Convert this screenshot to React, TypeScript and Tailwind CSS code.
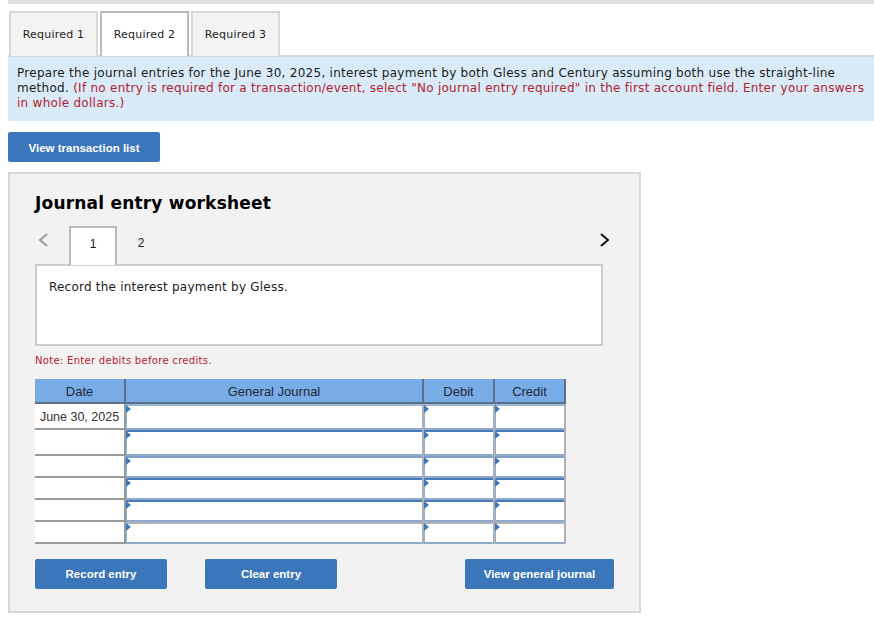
const rows = [
  { date: 'June 30, 2025', height: 'h-[26px]', top: 'border-t-[#9db8d8]' },
  { date: '', height: 'h-[26px]', top: 'border-t-[#4a7ab8]' },
  { date: '', height: 'h-[22px]', top: 'border-t-[#7f9fc9]' },
  { date: '', height: 'h-[22px]', top: 'border-t-[#4a7ab8]' },
  { date: '', height: 'h-[22px]', top: 'border-t-[#4a7ab8]' },
  { date: '', height: 'h-[22px]', top: 'border-t-[#b0b4ba]' },
];

const tabs = ['Required 1', 'Required 2', 'Required 3'];

function InputCell({ top, width }: { top: string; width: string }) {
  return (
    <div className={`relative ${width} shrink-0 border-r-2 border-r-[#b0b0b0] bg-white`}>
      <div className={`h-full border-b-2 border-l border-t-2 border-b-[#8fa9cc] border-l-[#8fb0dc] ${top}`} />
      <svg className="absolute left-0 top-[1px]" width="5" height="8" viewBox="0 0 5 8">
        <path d="M0 0L5 4L0 8Z" fill="#3a78bd" />
      </svg>
    </div>
  );
}

function BlueButton({ label, className }: { label: string; className: string }) {
  return (
    <button className={`h-[30px] rounded-[2px] bg-[#3a76b9] font-['Liberation_Sans',sans-serif] text-[11.5px] font-bold text-white ${className}`}>
      {label}
    </button>
  );
}

export default function App() {
  return (
    <div className="h-[623px] w-[874px] overflow-hidden bg-white pl-2 font-['DejaVu_Sans',sans-serif] text-[#1c1c1c]">
      <div className="h-1 bg-[#e0e0e0]" />

      <div className="mt-[7px] flex h-[46px] gap-[2px] border-b-2 border-[#d6d6d6] pl-[1px]">
        {tabs.map((tab, i) => (
          <div
            key={tab}
            className={`flex h-[45px] w-[89px] items-center justify-center border-2 border-b-0 pt-[2px] text-[11px] tracking-[0.2px] ${
              i === 1 ? 'border-[#bababa] bg-white' : 'border-[#d8d8d8] bg-[#f3f3f3]'
            }`}
          >
            {tab}
          </div>
        ))}
      </div>

      <div className="h-[64px] bg-[#d9ebf9] pl-[9px] pr-[2px] pt-[9px] text-[12px] leading-[15px] tracking-[0.27px]">
        Prepare the journal entries for the June 30, 2025, interest payment by both Gless and Century assuming both use the straight-line method.{' '}
        <span className="text-[#b5212c]">
          (If no entry is required for a transaction/event, select "No journal entry required" in the first account field. Enter your answers in whole dollars.)
        </span>
      </div>

      <div className="mt-[11px]">
        <BlueButton label="View transaction list" className="w-[152px] pt-[3px]" />
      </div>

      <div className="mt-[10px] h-[441px] w-[633px] border-2 border-[#d8d8d8] bg-[#f2f2f2] px-[25px] pt-[19px]">
        <h2 className="text-[17px] font-bold leading-[20px] tracking-[0.2px] text-black">Journal entry worksheet</h2>

        <div className="relative mt-[13px] flex h-[38px] items-start">
          <svg className="ml-[3px] mt-[7px]" width="10" height="14" viewBox="0 0 10 14" fill="none">
            <path d="M9 1L2 7L9 13" stroke="#9a9a9a" strokeWidth="2" />
          </svg>
          <div className="relative z-10 ml-[21px] flex h-[39px] w-[48px] items-center justify-center border-2 border-b-0 border-[#bababa] bg-white pb-[6px] font-['Liberation_Sans',sans-serif] text-[12px]">
            1
          </div>
          <div className="flex h-[39px] w-[48px] items-center justify-center pb-[6px] font-['Liberation_Sans',sans-serif] text-[12px]">2</div>
          <svg className="absolute left-[565px] top-[7px]" width="10" height="14" viewBox="0 0 10 14" fill="none">
            <path d="M1 1L8 7L1 13" stroke="#111111" strokeWidth="2" />
          </svg>
        </div>

        <div className="h-[82px] w-[568px] border-2 border-[#cccccc] bg-white px-[12px] pt-[14px] text-[12px] leading-[15px] tracking-[0.22px]">
          Record the interest payment by Gless.
        </div>

        <p className="mt-[9px] text-[10px] leading-[12px] tracking-[0.3px] text-[#b5212c]">Note: Enter debits before credits.</p>

        <div className="mt-[12px] w-[531px] font-['Liberation_Sans',sans-serif] text-[13px]">
          <div className="flex h-[25px] border-b-2 border-[#5b7087] bg-[#78ace6] text-center leading-[25px] text-[#1f2937]">
            <div className="w-[91px] border-r-2 border-[#5b7087]">Date</div>
            <div className="w-[298px] border-r-2 border-[#5b7087]">General Journal</div>
            <div className="w-[71px] border-r-2 border-[#5b7087]">Debit</div>
            <div className="w-[71px] border-r-2 border-[#5b7087]">Credit</div>
          </div>
          {rows.map((row, i) => (
            <div key={i} className={`flex ${row.height}`}>
              <div className="w-[91px] shrink-0 border-b-2 border-r-2 border-b-[#9a9a9a] border-r-[#9a9a9a] bg-white pt-[5px] text-center text-[12.5px] leading-[16px] text-[#333333]">
                {row.date}
              </div>
              <InputCell top={row.top} width="w-[298px]" />
              <InputCell top={row.top} width="w-[71px]" />
              <InputCell top={row.top} width="w-[71px]" />
            </div>
          ))}
        </div>

        <div className="mt-[15px] flex w-[579px]">
          <BlueButton label="Record entry" className="w-[132px] pt-[2px]" />
          <div className="ml-[38px]">
            <BlueButton label="Clear entry" className="w-[132px] pt-[2px]" />
          </div>
          <div className="ml-auto">
            <BlueButton label="View general journal" className="w-[149px] pt-[2px]" />
          </div>
        </div>
      </div>
    </div>
  );
}
